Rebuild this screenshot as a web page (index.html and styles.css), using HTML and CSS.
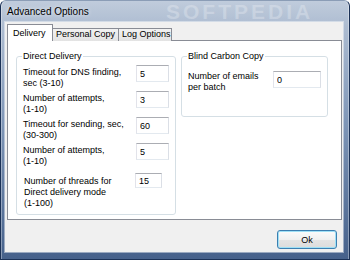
FILE: index.html
```html
<!DOCTYPE html>
<html lang="en">
<head>
    <meta charset="UTF-8">
    <title>Advanced Options</title>
    <link rel="stylesheet" href="styles.css">
</head>
<body>
    <div class="window">
        <!-- Title bar -->
        <div class="titlebar">
            <span class="title">Advanced Options</span>
        </div>
        <span class="watermark">SOFTPEDIA</span>

        <div class="client">
            <!-- Tabs -->
            <div class="tabs">
                <div class="tab active">Delivery</div>
                <div class="tab personal">Personal Copy</div>
                <div class="tab log">Log Options</div>
            </div>

            <div class="panel">
                <fieldset class="group direct">
                    <legend>Direct Delivery</legend>
                    <div class="row">
                        <label>Timeout for DNS finding,<br>sec (3-10)</label>
                        <input type="text" value="5">
                    </div>
                    <div class="row">
                        <label>Number of attempts,<br>(1-10)</label>
                        <input type="text" value="3">
                    </div>
                    <div class="row">
                        <label>Timeout for sending, sec,<br>(30-300)</label>
                        <input type="text" value="60">
                    </div>
                    <div class="row">
                        <label>Number of attempts,<br>(1-10)</label>
                        <input type="text" value="5">
                    </div>
                    <div class="row threads">
                        <label>Number of threads for<br>Direct delivery mode<br>(1-100)</label>
                        <input type="text" value="15">
                    </div>
                </fieldset>

                <fieldset class="group bcc">
                    <legend>Blind Carbon Copy</legend>
                    <div class="row">
                        <label>Number of emails<br>per batch</label>
                        <input type="text" value="0">
                    </div>
                </fieldset>
            </div>

            <div class="footer">
                <button>Ok</button>
            </div>
        </div>
    </div>
</body>
</html>
```

FILE: styles.css
```css
body {
    margin: 0;
    font-family: "Liberation Sans", Arial, sans-serif;
    font-size: 9px;
    color: #000;
}

/* Window frame */
.window {
    position: relative;
    box-sizing: border-box;
    width: 350px;
    height: 260px;
    display: flex;
    flex-direction: column;
    padding: 0 6px 7px 4px;
    border: 1px solid #1b3156;
    border-top-color: #8b9db6;
    border-radius: 6px 6px 0 0;
    background: linear-gradient(to bottom, #c0ccdc 0, #adbcd1 25px, #8198b9 45%, #46618b 100%);
    box-shadow: inset 1px 0 0 rgba(255, 255, 255, 0.35), inset -1px 0 0 rgba(255, 255, 255, 0.35);
    overflow: hidden;
}

.titlebar {
    height: 21px;
    display: flex;
    align-items: center;
    padding-left: 2px;
}

.title {
    font-size: 10px;
    text-shadow: 0 0 4px rgba(255, 255, 255, 0.9);
}

.watermark {
    position: absolute;
    top: 0;
    left: 165px;
    font-size: 21px;
    line-height: 21px;
    font-weight: bold;
    letter-spacing: 3px;
    color: rgba(255, 255, 255, 0.25);
}

/* Client area */
.client {
    flex: 1;
    display: flex;
    flex-direction: column;
    padding: 2px 1px 0 2px;
    background-color: #f0f0f0;
    box-shadow: 0 0 0 1px rgba(255, 255, 255, 0.45);
}

.tabs {
    position: relative;
    z-index: 1;
    display: flex;
    align-items: flex-end;
    height: 17px;
    margin-bottom: -1px;
}

.tab {
    box-sizing: border-box;
    height: 13px;
    line-height: 11px;
    padding-left: 3px;
    border: 1px solid #898c95;
    border-bottom: none;
    background: linear-gradient(to bottom, #f2f2f2, #e3e3e3);
    margin-left: -1px;
    white-space: nowrap;
}

.tab.active {
    height: 17px;
    width: 46px;
    padding-left: 5px;
    line-height: 17px;
    margin-left: 0;
    background: #fff;
}

.tab.personal {
    width: 67px;
}

.tab.log {
    width: 54px;
}

.panel {
    box-sizing: border-box;
    height: 180px;
    display: flex;
    align-items: flex-start;
    gap: 5px;
    padding: 10px 0 0 8px;
    border: 1px solid #898c95;
    background-color: #fff;
}

/* Group boxes */
.group {
    box-sizing: border-box;
    min-width: 0;
    margin: 0;
    padding: 3px 6px 0 6px;
    border: 1px solid #d5dfe5;
    border-radius: 3px;
}

.group legend {
    padding: 0 1px;
    margin-left: -1px;
    line-height: 11px;
}

.direct {
    width: 160px;
    height: 164px;
}

.bcc {
    width: 147px;
    height: 66px;
}

.row {
    display: flex;
    align-items: flex-start;
    height: 26px;
}

.row label {
    width: 113px;
    padding-top: 2px;
    line-height: 11px;
}

.row input {
    box-sizing: border-box;
    width: 33px;
    height: 17px;
    margin: 0;
    padding: 0 3px;
    border: 1px solid;
    border-color: #abadb3 #dbdfe6 #e3e9ef #e2e3ea;
    font: inherit;
    color: #000;
    background: #fff;
}

.row.threads {
    margin-top: 4px;
}

.row.threads label {
    width: 111px;
    padding-left: 1px;
    padding-top: 3px;
}

.row.threads input {
    width: 27px;
    height: 15px;
}

.bcc .row {
    margin-top: 6px;
}

.bcc .row label {
    width: 85px;
    padding-top: 0;
}

.bcc .row input {
    width: 48px;
}

/* Bottom buttons */
.footer {
    flex: 1;
    display: flex;
    justify-content: flex-end;
    align-items: flex-start;
    padding: 10px 5px 0 0;
}

.footer button {
    width: 60px;
    height: 19px;
    padding: 0;
    border: 1px solid #3c7fb1;
    border-radius: 3px;
    background: linear-gradient(to bottom, #fbfbfb 0%, #f0f0f0 50%, #e4e4e4 51%, #dcdcdc 100%);
    box-shadow: inset 0 0 0 1px #9fe0f6;
    font: inherit;
    color: #000;
}
```
